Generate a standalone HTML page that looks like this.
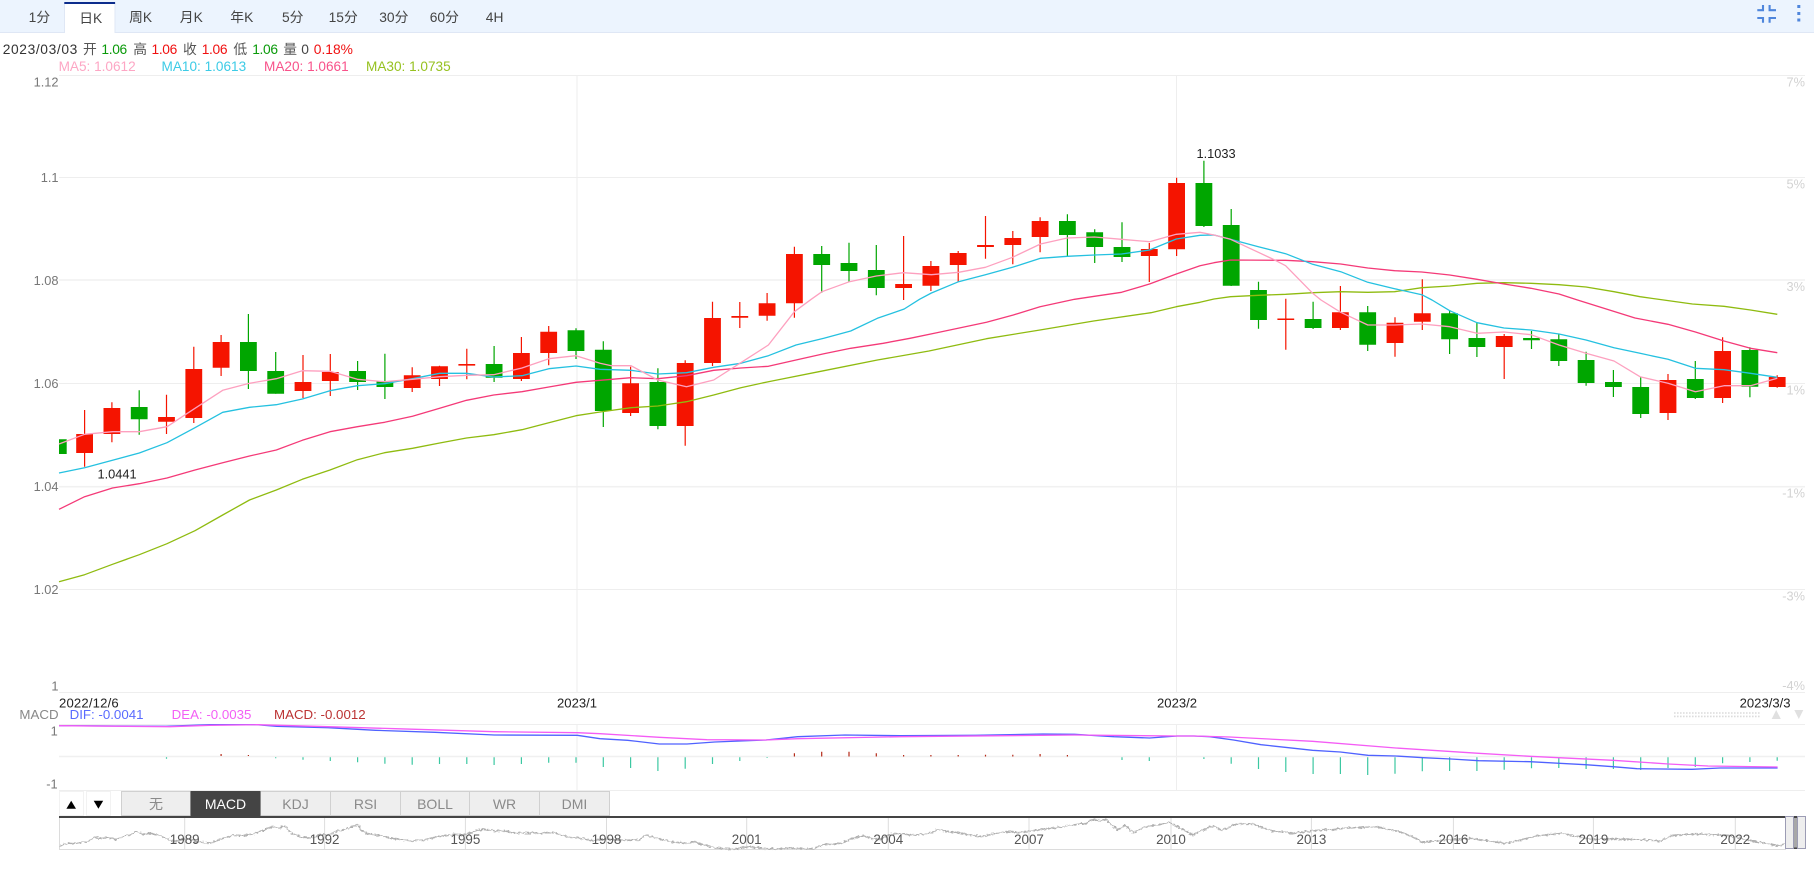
<!DOCTYPE html>
<html lang="zh">
<head>
<meta charset="utf-8">
<title>K线图</title>
<style>
html,body{margin:0;padding:0;background:#fff;width:1814px;height:877px;overflow:hidden}
svg{display:block;font-family:"Liberation Sans","Noto Sans CJK SC",sans-serif}
.tab{font-size:13.8px;fill:#444;text-anchor:middle}
.inf{font-size:13.8px}
.ma{font-size:13.6px}
.ax{font-size:12.8px;fill:#777;text-anchor:end}
.pc{font-size:12.8px;fill:#d2d2d2;text-anchor:end}
.dt{font-size:13.1px;fill:#222}
.bt{font-size:14px;fill:#8a8a8a;text-anchor:middle}
.nv{font-size:13.4px;fill:#555;text-anchor:middle}
.l{fill:none;stroke-width:1.3;stroke-linejoin:round}
</style>
</head>
<body>
<svg width="1814" height="877" viewBox="0 0 1814 877" xmlns="http://www.w3.org/2000/svg">
<defs>
<filter id="fz" filterUnits="userSpaceOnUse" x="55" y="812" width="1740" height="42">
<feTurbulence type="fractalNoise" baseFrequency="0.35 0.5" numOctaves="2" seed="4" result="n"/>
<feDisplacementMap in="SourceGraphic" in2="n" scale="4" xChannelSelector="R" yChannelSelector="G"/>
</filter>
</defs>
<!-- top bar -->
<rect x="0" y="0" width="1814" height="32.5" fill="#ecf4fe"/>
<rect x="0" y="32" width="1814" height="1" fill="#dfe7f5"/>
<rect x="64.5" y="2" width="50.5" height="31" fill="#fff"/>
<path d="M64.5 3V33M115 3V33" stroke="#dfe7f5" stroke-width="1" fill="none"/>
<rect x="64.3" y="2" width="50.8" height="2" fill="#0c2c8c"/>
<text class="tab" x="39.4" y="22">1分</text>
<text class="tab" x="90.7" y="23">日K</text>
<text class="tab" x="140.6" y="22">周K</text>
<text class="tab" x="191.3" y="22">月K</text>
<text class="tab" x="241.8" y="22">年K</text>
<text class="tab" x="292.7" y="22">5分</text>
<text class="tab" x="343.2" y="22">15分</text>
<text class="tab" x="393.8" y="22">30分</text>
<text class="tab" x="444.3" y="22">60分</text>
<text class="tab" x="494.6" y="22">4H</text>
<!-- compress icon -->
<path d="M1763 5V10.2H1757.3M1769.6 5V10.2H1776M1757.3 18H1763V22.7M1776 18H1769.6V22.7" fill="none" stroke="#4f86dc" stroke-width="2.1"/>
<rect x="1797.3" y="5" width="3" height="3" fill="#4f86dc"/>
<rect x="1797.3" y="12" width="3" height="3" fill="#4f86dc"/>
<rect x="1797.3" y="18.5" width="3" height="3" fill="#4f86dc"/>
<!-- info row -->
<g class="inf">
<text x="2.7" y="54" fill="#333" textLength="74.6">2023/03/03</text>
<text x="83" y="54" fill="#555">开</text>
<text x="101.4" y="54" fill="#0a9a0a" textLength="25.8">1.06</text>
<text x="133.2" y="54" fill="#555">高</text>
<text x="151.5" y="54" fill="#f01010" textLength="25.8">1.06</text>
<text x="183" y="54" fill="#555">收</text>
<text x="201.7" y="54" fill="#f01010" textLength="25.8">1.06</text>
<text x="233.4" y="54" fill="#555">低</text>
<text x="252.2" y="54" fill="#0a9a0a" textLength="25.8">1.06</text>
<text x="283.2" y="54" fill="#555">量</text>
<text x="301.2" y="54" fill="#444">0</text>
<text x="313.8" y="54" fill="#f01010">0.18%</text>
</g>
<g class="ma">
<text x="58.6" y="71" fill="#fda6c4">MA5: 1.0612</text>
<text x="161.5" y="71" fill="#3ccbe6">MA10: 1.0613</text>
<text x="264" y="71" fill="#f8528a">MA20: 1.0661</text>
<text x="366" y="71" fill="#96c11f">MA30: 1.0735</text>
</g>
<!-- grid -->
<g stroke="#eeeeee" stroke-width="1" fill="none">
<path d="M59 75.5H1805M59 177.5H1805M59 383.5H1805M59 589.5H1805M59 692.5H1805"/>
<path d="M59 280H1805M59 486.7H1805" stroke="#f1f1f1" stroke-width="1.6"/>
<path d="M577 75V692M1176.5 75V692M577 724V790M1176.5 724V790"/>
<path d="M59 724.5H1805M59 790.5H1805"/>
<path d="M59 756.5H1805" stroke="#f0f0f0" stroke-width="1.5"/>
</g>
<!-- axis labels -->
<text class="ax" x="58.5" y="86.5">1.12</text>
<text class="ax" x="58.5" y="182">1.1</text>
<text class="ax" x="58.5" y="285">1.08</text>
<text class="ax" x="58.5" y="388">1.06</text>
<text class="ax" x="58.5" y="491">1.04</text>
<text class="ax" x="58.5" y="594">1.02</text>
<text class="ax" x="58.5" y="690.5">1</text>
<text class="pc" x="1805" y="86.5">7%</text>
<text class="pc" x="1805" y="188.5">5%</text>
<text class="pc" x="1805" y="291">3%</text>
<text class="pc" x="1805" y="394.5">1%</text>
<text class="pc" x="1805" y="497.5">-1%</text>
<text class="pc" x="1805" y="600.5">-3%</text>
<text class="pc" x="1805" y="690">-4%</text>
<!-- candle wicks -->
<path fill="none" stroke="#f51400" stroke-width="1.2" d="M84.6 410V466.7M111.9 402.3V442.3M166.5 394.7V434M193.8 346.7V423M221.1 335V376M303 355V398M330.3 354V396M412.2 367.3V392M439.5 365.7V386M466.8 348.7V379.3M521.4 337V381M548.7 326V365.3M630.6 366.7V416M685.2 360.3V445.7M712.5 301.7V366M739.8 302V328M767.1 293V320.7M794.4 246.7V317.7M903.6 236V300M930.9 261V291M958.2 251V281.7M985.5 216V258.7M1012.8 231V264.3M1040.1 217.3V252.3M1149.3 243V282M1176.6 177.7V256M1285.8 298.7V349.7M1340.4 286V330M1395 317.3V356.7M1422.3 279.3V330M1504.2 334V379M1668 374V420M1722.6 337.3V403M1777.2 375.3V387.7"/>
<path fill="none" stroke="#00a600" stroke-width="1.2" d="M139.2 390.3V434.7M248.4 314V389M275.7 352V393.7M357.6 361V390M384.9 353.7V399M494.1 346V382M576 328.3V359M603.3 341.3V427M657.9 368.3V429.3M821.7 246V292.7M849 242.7V281.7M876.3 245V295.3M1067.4 214.3V256.7M1094.7 229.3V263M1122 222.3V262M1203.9 160.8V227M1231.2 209V286M1258.5 281.7V328.7M1313.1 301.7V329M1367.7 306V351M1449.6 310V354M1476.9 322.7V357M1531.5 331V349M1558.8 334.3V366M1586.1 351.7V385.7M1613.4 370V397M1640.7 376.7V418M1695.3 361V399M1749.9 347.3V397.3"/>
<!-- candle bodies -->
<path fill="#f51400" d="M76.2 434h16.8v19h-16.8zM103.5 408h16.8v26h-16.8zM158.1 417h16.8v4.7h-16.8zM185.4 369h16.8v49h-16.8zM212.7 342h16.8v25.7h-16.8zM294.6 382h16.8v9h-16.8zM321.9 372h16.8v9h-16.8zM403.8 375.3h16.8v12.7h-16.8zM431.1 366.3h16.8v12.7h-16.8zM458.4 364h16.8v1.6h-16.8zM513 353h16.8v26h-16.8zM540.3 331.7h16.8v21.3h-16.8zM622.2 383.3h16.8v29.7h-16.8zM676.8 363h16.8v63h-16.8zM704.1 318h16.8v45h-16.8zM731.4 316h16.8v1.7h-16.8zM758.7 303.3h16.8v12.4h-16.8zM786 254h16.8v49.3h-16.8zM895.2 284h16.8v4h-16.8zM922.5 266h16.8v19.7h-16.8zM949.8 253h16.8v12h-16.8zM977.1 245h16.8v2h-16.8zM1004.4 238h16.8v7h-16.8zM1031.7 221h16.8v16h-16.8zM1140.9 249h16.8v7h-16.8zM1168.2 183h16.8v66.3h-16.8zM1277.4 318.5h16.8v1.5h-16.8zM1332 312.3h16.8v15.7h-16.8zM1386.6 322.7h16.8v20.3h-16.8zM1413.9 313.3h16.8v8.4h-16.8zM1495.8 336h16.8v11h-16.8zM1659.6 380h16.8v33h-16.8zM1714.2 351h16.8v47h-16.8zM1768.8 377h16.8v10h-16.8z"/>
<path fill="#00a600" d="M59 439.3h7.7v14.7h-7.7zM130.8 407h16.8v12.3h-16.8zM240 342h16.8v29h-16.8zM267.3 371h16.8v22.7h-16.8zM349.2 371h16.8v11h-16.8zM376.5 381h16.8v6h-16.8zM485.7 364h16.8v13.7h-16.8zM567.6 330.3h16.8v20.7h-16.8zM594.9 349.7h16.8v61.3h-16.8zM649.5 382h16.8v44h-16.8zM813.3 254h16.8v11h-16.8zM840.6 263h16.8v8h-16.8zM867.9 270h16.8v18h-16.8zM1059 221h16.8v14h-16.8zM1086.3 232.3h16.8v14.7h-16.8zM1113.6 247h16.8v10h-16.8zM1195.5 183h16.8v43h-16.8zM1222.8 225h16.8v60.7h-16.8zM1250.1 290h16.8v30h-16.8zM1304.7 319h16.8v9h-16.8zM1359.3 312.3h16.8v32.4h-16.8zM1441.2 313.3h16.8v26h-16.8zM1468.5 338h16.8v9h-16.8zM1523.1 338h16.8v2.3h-16.8zM1550.4 339.3h16.8v21.7h-16.8zM1577.7 360h16.8v23h-16.8zM1605 382h16.8v5h-16.8zM1632.3 387h16.8v27h-16.8zM1686.9 379h16.8v19h-16.8zM1741.5 350h16.8v36.7h-16.8z"/>
<!-- MA lines -->
<polyline class="l" stroke="#8fbb10" points="59,581.7 84.6,574.7 112.5,564.3 139.3,554.7 167,543.7 195,530.7 222.7,515 249.5,500 276.3,490 302.3,479.3 330,470 357.4,459.7 384.6,452.7 412.5,448.3 439.7,443 466.5,438 493.7,434.7 522,429.7 548.8,422.7 576,415.7 600,412 631,407.7 657.8,406 686.5,401.7 713.7,395 740.8,387.7 768.4,381.7 823.9,370.7 877.4,360 929,351 986.5,338.7 1040,330 1093.6,321 1151,312.7 1176.3,306.7 1200,302.3 1214,299 1230.5,296.7 1258.4,295.3 1285.6,294.3 1312.7,292.7 1340.7,291.7 1367.8,292.3 1394.6,291.7 1421.8,287.7 1449.7,286 1477,283.3 1504,282.7 1531,283.3 1559,284.7 1586,287 1614,291.7 1640,296.7 1663.7,300 1692.4,304 1724,306.3 1750.5,310 1777.3,314.3"/>
<polyline class="l" stroke="#f43a78" points="59,509.3 84.6,496.7 112.5,488 139.3,483.7 167,478 195,470 222.7,462.7 249.5,456 276.3,450 302.3,440.3 330,431.7 357.4,426.7 384.6,422.3 412.5,416.3 439.7,408.3 466.5,400.3 493.7,395 522,391.7 548.8,387 576,382.3 600,380.3 631,377.7 657.8,378.7 686.5,375.7 713.7,370.3 740.8,368 768.4,366.3 796,360 823.9,353.7 850.7,348.3 883.2,343.3 910,338.3 936.8,332.7 986.5,322.3 1013.3,315 1040,306.7 1074.5,299.3 1094.4,296.3 1121.6,292.3 1149.5,284 1176.3,274 1200,265.7 1214,262.7 1230.5,260 1285.6,260.3 1312.7,261.7 1340.7,264 1367.8,268 1394.6,270.7 1421.8,272 1449.7,275 1477,279.3 1504,284 1531,288.3 1559,294 1577.5,300 1635,318 1668,324.3 1695.4,332 1724,341 1750.5,348.3 1777.3,352.7"/>
<polyline class="l" stroke="#25c1e0" points="59,473 84.6,467.7 112.5,460.3 139.3,453 167,442.7 195,427.7 222.7,412.3 249.5,407.3 276.3,404.7 302.3,399 330,390.7 357.4,385.7 384.6,383.7 412.5,378.7 439.7,373.3 466.5,373.3 493.7,377 522,375.7 548.8,368.7 576,366 600,369.3 631,370.3 657.8,374 686.5,372.7 713.7,367.3 740.8,363.3 768.4,355.7 796,345 823.9,338.3 850.7,331 877.4,318.3 904.2,309 919.5,299.3 931.4,293 958.6,281.7 985.4,274.7 1012.5,267.3 1040.5,258.3 1067.3,256.3 1094.4,255 1121.6,254 1149.5,250 1176.3,239 1200,235.3 1214,235 1230.5,239.3 1258.4,246.7 1285.6,253.7 1312.7,264.3 1340.7,271.7 1367.8,282.3 1394.6,288.7 1421.8,294.7 1432,300 1449.7,310.7 1477,322.7 1504,328 1531,330 1559,334 1586,340 1614,347.7 1640,353.3 1668,359.3 1695.4,368.3 1724,369.7 1750.5,373.3 1777.3,377.3"/>
<polyline class="l" stroke="#fda0bf" points="59,444 84.6,434.3 112.5,431.7 139.3,431.7 167,426.7 195,408.3 222.7,390.3 249.5,383.3 276.3,378.7 302.3,370.7 330,371.3 357.4,379.3 384.6,381.7 412.5,379.3 439.7,376.7 466.5,375.3 493.7,374.7 522,368 548.8,358.7 576,355.7 600,363.3 611.5,365.7 631,365.7 657.8,380 686.5,386.7 713.7,380 740.8,362.7 768.4,345 794.4,311.7 811.2,299.3 822,291.7 849.5,281.7 876.3,276 903.5,272.7 931.4,274.7 958.6,272.3 985.4,267.3 1012.5,257.3 1040.5,244 1067.3,238 1094.4,237 1121.6,239.3 1149.5,241.7 1176.3,234.3 1200,232.3 1214,235 1230.5,239.3 1273.3,259.3 1285.6,265.7 1312.7,293.3 1321,300 1340.7,312.3 1367.8,325 1394.6,325 1421.8,324 1449.7,326.7 1477,333.3 1504,332 1531,334.7 1559,345 1586,353.3 1614,361 1640,376.7 1668,383.3 1695.4,391.7 1724,385.7 1750.5,385.7 1777.3,378.3"/>
<!-- extreme labels -->
<text x="1196.5" y="158" font-size="12.8" fill="#222">1.1033</text>
<text x="97.5" y="478.7" font-size="12.8" fill="#222">1.0441</text>
<!-- date axis -->
<text class="dt" x="59" y="707.5" textLength="59.7">2022/12/6</text>
<text class="dt" x="557" y="707.5">2023/1</text>
<text class="dt" x="1157" y="707.5">2023/2</text>
<text class="dt" x="1739.6" y="707.5">2023/3/3</text>
<!-- MACD legend -->
<g font-size="13.3">
<text x="19.4" y="719" fill="#888">MACD</text>
<text x="69.6" y="719" fill="#5a6bff">DIF: -0.0041</text>
<text x="171.6" y="719" fill="#f35ff5">DEA: -0.0035</text>
<text x="274" y="719" fill="#bb3333">MACD: -0.0012</text>
</g>
<path d="M1674 713H1761M1674 716.4H1761" stroke="#dcdcdc" stroke-width="1.6" stroke-dasharray="1.6 1.4" fill="none"/>
<polygon points="1776.2,710 1780.8,719 1771.7,719" fill="#e0e0e0"/>
<polygon points="1794.3,710 1803.3,710 1798.8,719" fill="#e0e0e0"/>
<text class="ax" x="57.7" y="735.3">1</text>
<text class="ax" x="57.7" y="788.6">-1</text>
<!-- MACD histogram -->
<path fill="none" stroke="#3cc8a2" stroke-width="1.2" d="M166.5 757.3V758.7M275.7 757.3V758.3M303 757.3V759.7M330.3 757.3V761M357.6 757.3V762.3M384.9 757.3V763.7M412.2 757.3V764.7M439.5 757.3V764M466.8 757.3V764M494.1 757.3V765M521.4 757.3V764M548.7 757.3V762.7M576 757.3V762.7M603.3 757.3V767M630.6 757.3V768M657.9 757.3V771M685.2 757.3V768.7M712.5 757.3V764M739.8 757.3V761M767.1 757.3V758M1122 757.3V760M1149.3 757.3V761M1203.9 757.3V759M1231.2 757.3V763.7M1258.5 757.3V769M1285.8 757.3V772M1313.1 757.3V774M1340.4 757.3V774M1367.7 757.3V775M1395 757.3V773.7M1422.3 757.3V771.3M1449.6 757.3V771M1476.9 757.3V771M1504.2 757.3V769.7M1531.5 757.3V768.3M1558.8 757.3V768M1586.1 757.3V769M1613.4 757.3V769M1640.7 757.3V770M1668 757.3V768M1695.3 757.3V767M1722.6 757.3V763.3M1749.9 757.3V762M1777.2 757.3V760.7"/>
<path fill="none" stroke="#b52a18" stroke-width="1.2" d="M221.1 756V754M248.4 756V755M794.4 756.5V753.3M821.7 756.5V751.7M849 756.5V751.7M876.3 756.5V753.3M903.6 756.5V755M930.9 756.5V755M958.2 756.5V755M985.5 756.5V754.7M1012.8 756.5V754.7M1040.1 756.5V754M1067.4 756.5V755"/>
<!-- MACD lines -->
<polyline class="l" stroke="#4f62ff" points="59,725.7 166,726.3 209.6,724.7 257,724.7 276.8,726.3 328,727.7 375.6,730.3 435,732.3 494.3,735 577.3,735.3 600,738.7 627.7,740.3 659.3,744 687,744 714.7,742 766,740 797.7,736.7 845,735 900.5,735.7 975.6,735.3 1042.9,734 1074.5,734.3 1114,736.7 1149.6,738 1177.3,736 1194,736 1209.8,736.7 1233.5,740 1261,744.7 1285,747.3 1312.6,750.3 1340.3,752 1368,755.3 1395.7,756 1423.3,757.7 1451,759 1478.7,760.7 1530,761.7 1585.5,764.7 1613,766.7 1637,768.7 1692,769.3 1720,768 1777.6,768"/>
<polyline class="l" stroke="#f45cf5" points="59,725.7 170,726.7 209.6,725.3 257,724.7 328,726.7 395.4,728.7 494.3,731.7 577.3,732.7 600,733.7 659.3,737.3 706.8,739.7 766,740 797.7,738.7 900.5,736.7 1074.5,735 1177.3,736 1194,736 1229.6,737 1312.6,741.3 1395.7,748 1478.7,753.3 1530,756.3 1613,760.3 1668.5,764 1708,766 1777.6,767"/>
<!-- indicator buttons -->
<rect x="59.5" y="791.5" width="24" height="24" fill="#fff" stroke="#f2f2f2"/>
<rect x="86.5" y="791.5" width="24" height="24" fill="#fff" stroke="#f2f2f2"/>
<polygon points="71.2,800.7 76,808.7 66.4,808.7" fill="#000"/>
<polygon points="93.7,800.7 103.2,800.7 98.4,808.7" fill="#000"/>
<g fill="#eeeeee" stroke="#d0d0d0" stroke-width="1">
<rect x="121.5" y="791.5" width="69" height="24"/>
<rect x="260.5" y="791.5" width="70" height="24"/>
<rect x="330.5" y="791.5" width="70" height="24"/>
<rect x="400.5" y="791.5" width="69" height="24"/>
<rect x="469.5" y="791.5" width="70" height="24"/>
<rect x="539.5" y="791.5" width="70" height="24"/>
</g>
<rect x="190.5" y="791" width="70" height="25" fill="#444"/>
<text class="bt" x="156" y="809">无</text>
<text class="bt" x="225.5" y="809" style="fill:#fff">MACD</text>
<text class="bt" x="295.5" y="809">KDJ</text>
<text class="bt" x="365.5" y="809">RSI</text>
<text class="bt" x="435" y="809">BOLL</text>
<text class="bt" x="504.5" y="809">WR</text>
<text class="bt" x="574.5" y="809">DMI</text>
<!-- navigator -->
<path d="M59.5 817V849.5M184.7 818V849M324.6 818V849M465.4 818V849M606.5 818V849M746.7 818V849M888.3 818V849M1029 818V849M1171 818V849M1311.4 818V849M1453.4 818V849M1593.4 818V849M1735.3 818V849" stroke="#dcdcdc" stroke-width="1" fill="none"/>
<path d="M59 849.5H1786" stroke="#dcdcdc" stroke-width="1" fill="none"/>
<polyline filter="url(#fz)" fill="none" stroke="#b0b0b0" stroke-width="1.3" stroke-linejoin="round" points="59.3,846.7 64,844.5 69.2,843.3 76,843.6 83,841.9 89,841.7 93,837.3 100,838.5 108,837.7 116.6,839.3 125,835.5 131,834.5 136.4,831.7 142,834 150,833.5 158,835 166,838.5 174,841.7 182,839.5 189.8,839.3 199,842 209.6,843.3 220,839.5 233.3,835 243,835.5 253,834 263,830.5 272.8,826.7 279,828 284.7,825.7 288,830 292.6,834 302,837 312.4,838.3 320,834.5 328,835 336,831.7 345,829 351,827.5 357.8,824 361,830 365.8,833.3 380,835.5 390,838 399.4,839.3 412,841 423,840 438,836.5 454.7,834 463,835 470.5,833.3 476,830.5 482.4,829.3 494.3,830.7 504,831 514,832.7 535,833 553.6,832.7 562,835 569.4,837.3 582,838.5 593,840.7 605,838.7 619.8,840 639.5,840 645.5,834.7 652,837 663.3,840 673,842 683,843.3 695,841.7 706,845.5 718.6,848.3 734.4,849 750,846.7 762,848.3 775,849 790,848 813.5,849 823.4,844.3 832,844 841.2,843.3 852,838.5 863,835.7 872,838.5 880.7,839.3 888,835.5 894.6,833.3 912,835 928,834 938,829.3 947,831.5 955.9,832.3 968,834.5 981.6,836.7 995,833.5 1007.3,831.7 1020,832.5 1031,830.7 1046,829 1062.6,826.7 1075,824.5 1086.4,823.3 1092.3,819.3 1100,820.5 1106,819.3 1112,825 1118,830 1123,826.5 1126,825 1130,830 1133.8,832.7 1140,829 1145.7,826.7 1158,825 1169.4,822.3 1180,828 1193,835 1203,830 1213.8,825.7 1221.7,830.7 1229,827 1237.5,824 1253.3,824 1263,828 1273,831 1283,832 1292.9,833.3 1306,831.5 1320.5,830 1332,829.5 1344.3,828.3 1360,827.5 1375.9,826.7 1388,829 1399.6,831.7 1411,836 1423.3,842.3 1435,841 1447,840 1460,839.5 1470.8,838.3 1490,841 1506.4,843.3 1520,840 1538,835.7 1550,834.5 1561.7,833.3 1575,836 1589.4,839 1610,839 1629,839.3 1645,840 1660.6,841 1666,838.5 1672.5,835.7 1685,834.5 1696.2,834 1710,834.5 1723.9,835 1735,837 1747.6,840 1763,843 1779.2,846 1787,843.3"/>
<text class="nv" x="184.7" y="844">1989</text>
<text class="nv" x="324.6" y="844">1992</text>
<text class="nv" x="465.4" y="844">1995</text>
<text class="nv" x="606.5" y="844">1998</text>
<text class="nv" x="746.7" y="844">2001</text>
<text class="nv" x="888.3" y="844">2004</text>
<text class="nv" x="1029" y="844">2007</text>
<text class="nv" x="1171" y="844">2010</text>
<text class="nv" x="1311.4" y="844">2013</text>
<text class="nv" x="1453.4" y="844">2016</text>
<text class="nv" x="1593.4" y="844">2019</text>
<text class="nv" x="1735.3" y="844">2022</text>
<rect x="59" y="816" width="1727" height="2" fill="#444"/>
<rect x="1793" y="816" width="4.5" height="33" fill="#a8a8a8"/>
<rect x="1793" y="816" width="4.5" height="2" fill="#444"/>
<rect x="1793" y="847.5" width="4.5" height="1.5" fill="#444"/>
<rect x="1785.5" y="816.5" width="8" height="32" fill="#eeeeee" stroke="#9c9cb4"/>
<rect x="1797.5" y="816.5" width="8" height="32" fill="#eeeeee" stroke="#9c9cb4"/>
</svg>
</body>
</html>
